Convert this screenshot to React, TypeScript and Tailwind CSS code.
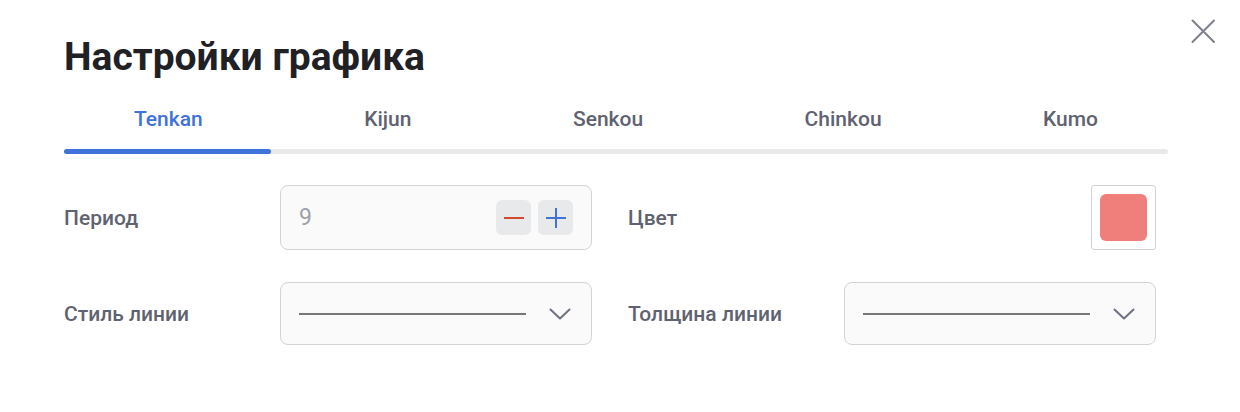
import React from "react";

const tabs = ["Tenkan", "Kijun", "Senkou", "Chinkou", "Kumo"];

function Chevron() {
  return (
    <svg width="22" height="12" viewBox="0 0 22 12" fill="none">
      <path d="M1.5 1.5 L11 10.5 L20.5 1.5" stroke="#6e7280" strokeWidth="2" strokeLinecap="round" strokeLinejoin="round" />
    </svg>
  );
}

function LineSelect() {
  return (
    <div className="w-[312px] h-[63px] rounded-[8px] border border-[#d3d3d6] bg-[#fafafa] flex items-center pl-[18px] pr-[20px]">
      <div className="w-[227px] h-[2px] bg-[#777777]" />
      <div className="ml-auto flex items-center">
        <Chevron />
      </div>
    </div>
  );
}

export default function App() {
  return (
    <div
      className="relative w-[1240px] h-[412px] bg-white overflow-hidden"
      style={{ fontFamily: "Roboto, 'Noto Sans', sans-serif" }}
    >
      <button className="absolute left-[1190px] top-[18px] w-[26px] h-[26px] flex items-center justify-center">
        <svg width="26" height="26" viewBox="0 0 26 26" fill="none">
          <path d="M2.5 2.5 L24 24 M24 2.5 L2.5 24" stroke="#7d818d" strokeWidth="2" strokeLinecap="round" />
        </svg>
      </button>

      <div className="pl-[64px] pr-[72px]">
        <h1 className="pt-[38px] text-[39px] leading-none font-bold text-[#1f2125]">
          Настройки графика
        </h1>

        <div className="mt-[32px] w-[1104px]">
          <div className="flex justify-between px-[70px]">
            {tabs.map((t, i) => (
              <div
                key={t}
                className={
                  "text-[21px] leading-none font-medium " +
                  (i === 0 ? "text-[#3f73d9]" : "text-[#5f6270]")
                }
              >
                {t}
              </div>
            ))}
          </div>
          <div className="mt-[19px] h-[5px] rounded-full bg-[#e9e9eb] relative">
            <div className="absolute left-0 top-0 h-[5px] w-[207px] rounded-full bg-[#3f73d9]" />
          </div>
        </div>

        <div className="mt-[31px] flex flex-col gap-[32px] w-[1092px]">
          <div className="flex items-center">
            <div className="w-[216px] pt-[2px] text-[21px] font-medium text-[#5f6270]">Период</div>
            <div className="w-[312px] h-[65px] rounded-[8px] border border-[#d3d3d6] bg-[#fafafa] flex items-center pl-[18px] pr-[18px]">
              <span className="pt-[1px] text-[23px] text-[#9da1a9]">9</span>
              <div className="ml-auto flex gap-[7px]">
                <div className="w-[35px] h-[35px] rounded-[6px] bg-[#e8e9eb] flex items-center justify-center">
                  <div className="w-[20px] h-[2px] bg-[#d5492c]" />
                </div>
                <div className="w-[35px] h-[35px] rounded-[6px] bg-[#e8e9eb] flex items-center justify-center relative">
                  <div className="w-[20px] h-[2px] bg-[#3f73d9]" />
                  <div className="absolute w-[2px] h-[20px] bg-[#3f73d9]" />
                </div>
              </div>
            </div>
            <div className="ml-[36px] w-[216px] pt-[2px] text-[21px] font-medium text-[#5f6270]">Цвет</div>
            <div className="w-[312px] flex justify-end">
              <div className="w-[65px] h-[65px] rounded-[3px] border border-[#d3d3d6] bg-white p-[8px]">
                <div className="w-full h-full rounded-[6px] bg-[#f07f7b]" />
              </div>
            </div>
          </div>

          <div className="flex items-center">
            <div className="w-[216px] pt-[2px] text-[21px] font-medium text-[#5f6270]">Стиль линии</div>
            <LineSelect />
            <div className="ml-[36px] w-[216px] pt-[2px] text-[21px] font-medium text-[#5f6270]">Толщина линии</div>
            <LineSelect />
          </div>
        </div>
      </div>
    </div>
  );
}
